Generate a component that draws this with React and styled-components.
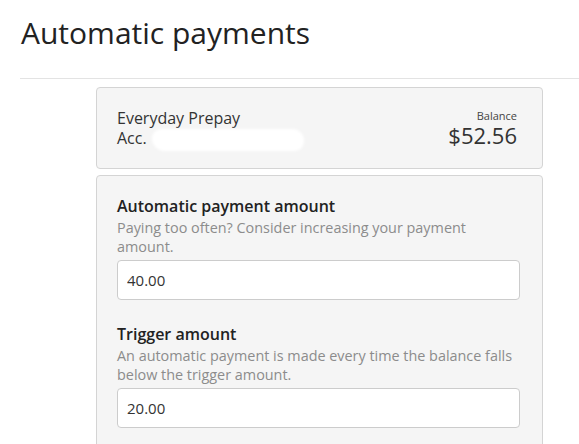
import React from 'react';
import styled, { createGlobalStyle } from 'styled-components';

const GlobalStyle = createGlobalStyle`
  body {
    margin: 0;
    background: #ffffff;
    font-family: "Open Sans", "Noto Sans", sans-serif;
    color: #333333;
  }
`;

const Page = styled.div`
  padding: 15px 0 0 20px;
`;

const Title = styled.h1`
  margin: 0 0 27px 0;
  padding-left: 1px;
  font-size: 30px;
  line-height: 36px;
  font-weight: 400;
  color: #222222;
`;

const Divider = styled.hr`
  margin: 0;
  border: 0;
  border-top: 1px solid #e3e3e3;
`;

const Column = styled.div`
  margin: 8px 0 0 76px;
  width: 447px;
  display: flex;
  flex-direction: column;
  gap: 6px;
`;

const Card = styled.div`
  background: #f5f5f5;
  border: 1px solid #d4d4d4;
  border-radius: 4px;
  padding: ${(p) => p.$padding || '20px'};
`;

const AccountRow = styled.div`
  display: flex;
  justify-content: space-between;
  align-items: flex-start;
`;

const AccountName = styled.div`
  font-size: 16px;
  line-height: 20px;
  color: #333333;
`;

/* white smudge that hides the account number */
const Redacted = styled.span`
  display: inline-block;
  width: 146px;
  height: 16px;
  margin-left: 4px;
  vertical-align: -4px;
  background: #ffffff;
  border-radius: 10px 14px 10px 16px;
  box-shadow: 0 0 3px 3px #ffffff;
`;

const BalanceBlock = styled.div`
  display: flex;
  flex-direction: column;
  align-items: flex-end;
`;

const BalanceLabel = styled.div`
  font-size: 11px;
  line-height: 16px;
  color: #444444;
`;

const BalanceAmount = styled.div`
  font-size: 22px;
  line-height: 22px;
  color: #333333;
`;

const Field = styled.div`
  margin-top: ${(p) => (p.$first ? '0' : '24px')};
`;

const Label = styled.div`
  font-size: 16px;
  line-height: 20px;
  font-weight: 600;
  color: #222222;
`;

const Hint = styled.div`
  font-size: 14.4px;
  line-height: 19px;
  color: #8c8c8c;
  margin: 2px 0 4px 0;
`;

const Input = styled.input`
  display: block;
  box-sizing: border-box;
  width: 403px;
  height: 40px;
  padding: 0 9px;
  border: 1px solid #cccccc;
  border-radius: 4px;
  background: #ffffff;
  font-family: "Open Sans", "Noto Sans", sans-serif;
  font-size: 15px;
  color: #333333;
  outline: none;
`;

export default function App() {
  return (
    <Page>
      <GlobalStyle />
      <Title>Automatic payments</Title>
      <Divider />
      <Column>
        <Card $padding="20px 25px 20px 20px">
          <AccountRow>
            <AccountName>
              Everyday Prepay
              <br />
              Acc. <Redacted />
            </AccountName>
            <BalanceBlock>
              <BalanceLabel>Balance</BalanceLabel>
              <BalanceAmount>$52.56</BalanceAmount>
            </BalanceBlock>
          </AccountRow>
        </Card>
        <Card $padding="20px 22px 30px 20px">
          <Field $first>
            <Label>Automatic payment amount</Label>
            <Hint>Paying too often? Consider increasing your payment amount.</Hint>
            <Input defaultValue="40.00" />
          </Field>
          <Field>
            <Label>Trigger amount</Label>
            <Hint>An automatic payment is made every time the balance falls below the trigger amount.</Hint>
            <Input defaultValue="20.00" />
          </Field>
        </Card>
      </Column>
    </Page>
  );
}
